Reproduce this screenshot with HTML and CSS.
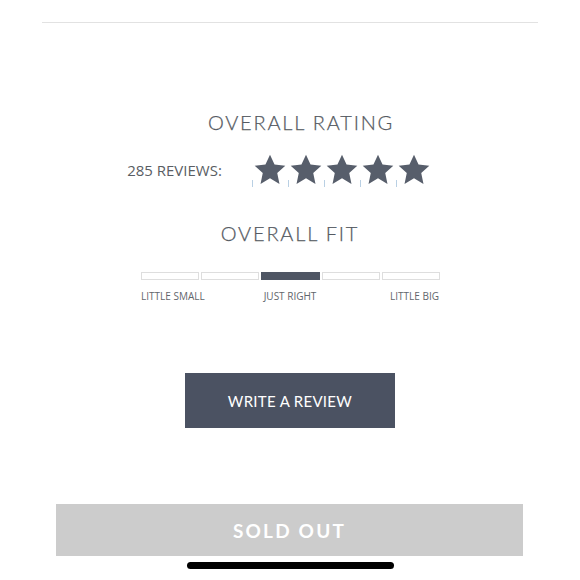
FILE: index.html
```html
<!DOCTYPE html>
<html lang="en">
<head>
<meta charset="utf-8">
<title>Reviews</title>
<link rel="stylesheet" href="styles.css">
</head>
<body>
<div class="page">
  <hr class="rule">
  <section class="summary">
    <h2 class="heading rating-heading">OVERALL RATING</h2>
    <div class="rating-row">
      <span class="count">285 REVIEWS:</span>
      <div class="stars">
        <span class="star"><svg viewBox="0 0 24 24"><polygon points="12,1.2 15.2,8.2 22.8,9 17.1,14.2 18.7,21.8 12,17.9 5.3,21.8 6.9,14.2 1.2,9 8.8,8.2"/></svg></span>
        <span class="star"><svg viewBox="0 0 24 24"><polygon points="12,1.2 15.2,8.2 22.8,9 17.1,14.2 18.7,21.8 12,17.9 5.3,21.8 6.9,14.2 1.2,9 8.8,8.2"/></svg></span>
        <span class="star"><svg viewBox="0 0 24 24"><polygon points="12,1.2 15.2,8.2 22.8,9 17.1,14.2 18.7,21.8 12,17.9 5.3,21.8 6.9,14.2 1.2,9 8.8,8.2"/></svg></span>
        <span class="star"><svg viewBox="0 0 24 24"><polygon points="12,1.2 15.2,8.2 22.8,9 17.1,14.2 18.7,21.8 12,17.9 5.3,21.8 6.9,14.2 1.2,9 8.8,8.2"/></svg></span>
        <span class="star"><svg viewBox="0 0 24 24"><polygon points="12,1.2 15.2,8.2 22.8,9 17.1,14.2 18.7,21.8 12,17.9 5.3,21.8 6.9,14.2 1.2,9 8.8,8.2"/></svg></span>
      </div>
    </div>
    <h2 class="heading fit-heading">OVERALL FIT</h2>
    <div class="fit">
      <div class="fit-bar">
        <span class="seg"></span>
        <span class="seg"></span>
        <span class="seg active"></span>
        <span class="seg"></span>
        <span class="seg"></span>
      </div>
      <div class="fit-labels">
        <span class="lbl-left">LITTLE SMALL</span>
        <span class="lbl-mid">JUST RIGHT</span>
        <span class="lbl-right">LITTLE BIG</span>
      </div>
    </div>
    <button class="write-btn">WRITE A REVIEW</button>
  </section>
  <div class="sold-out">SOLD OUT</div>
  <div class="home-indicator"></div>
</div>
</body>
</html>
```
FILE: styles.css
```css
* { box-sizing: border-box; }
html, body { margin: 0; padding: 0; background: #fff; }
body { font-family: "Lato", "Open Sans", sans-serif; }
.page {
  position: relative;
  width: 580px;
  height: 580px;
  overflow: hidden;
  display: flex;
  flex-direction: column;
}
.rule {
  margin: 22px 42px 0;
  border: 0;
  border-top: 1px solid #e2e2e2;
  height: 0;
}
.summary {
  display: flex;
  flex-direction: column;
  align-items: center;
}
.heading {
  margin: 0;
  font-family: "Lato", sans-serif;
  font-weight: 300;
  font-size: 20px;
  line-height: 24px;
  letter-spacing: 1.8px;
  color: #555a62;
  -webkit-text-stroke: 0.25px #555a62;
}
.rating-heading { margin-top: 87px; padding-left: 22px; }
.rating-row {
  display: flex;
  align-items: center;
  margin-top: 19px;
  padding-right: 22px;
}
.count {
  font-family: "Open Sans", sans-serif;
  font-size: 15px;
  color: #595d63;
  margin-right: 31px;
}
.stars { display: flex; gap: 2px; }
.star {
  position: relative;
  width: 34px;
  height: 34px;
  display: block;
}
.star svg { width: 34px; height: 34px; display: block; fill: #575e6b; }
.star::before {
  content: "";
  position: absolute;
  left: -1px;
  bottom: 0;
  width: 1px;
  height: 7px;
  background: #b9d0e4;
}
.fit-heading { margin-top: 34px; }
.fit {
  width: 300px;
  margin-top: 27px;
  padding-left: 1px;
}
.fit-bar { display: flex; gap: 2px; }
.seg {
  flex: 1;
  height: 8px;
  border: 1px solid #dedede;
  background: #fff;
}
.seg.active { background: #4f5664; border-color: #4f5664; }
.fit-labels {
  display: grid;
  grid-template-columns: 1fr auto 1fr;
  margin-top: 9px;
  font-family: "Open Sans", sans-serif;
  font-size: 10px;
  line-height: 14px;
  color: #62666c;
  padding-right: 1px;
}
.lbl-left { text-align: left; }
.lbl-mid { text-align: center; }
.lbl-right { text-align: right; }
.write-btn {
  margin-top: 70px;
  width: 210px;
  height: 55px;
  border: 0;
  background: #4b5262;
  color: #fff;
  font-family: "Lato", sans-serif;
  font-weight: 400;
  font-size: 15px;
  letter-spacing: 0.3px;
  padding: 0;
}
.sold-out {
  margin: 76px 57px 0 56px;
  height: 52px;
  background: #cccccc;
  color: #fff;
  display: flex;
  align-items: center;
  justify-content: center;
  font-family: "Lato", sans-serif;
  font-weight: 700;
  font-size: 19px;
  letter-spacing: 2.2px;
}
.home-indicator {
  position: absolute;
  left: 187px;
  top: 562px;
  width: 207px;
  height: 7px;
  border-radius: 4px;
  background: #000;
}
```
